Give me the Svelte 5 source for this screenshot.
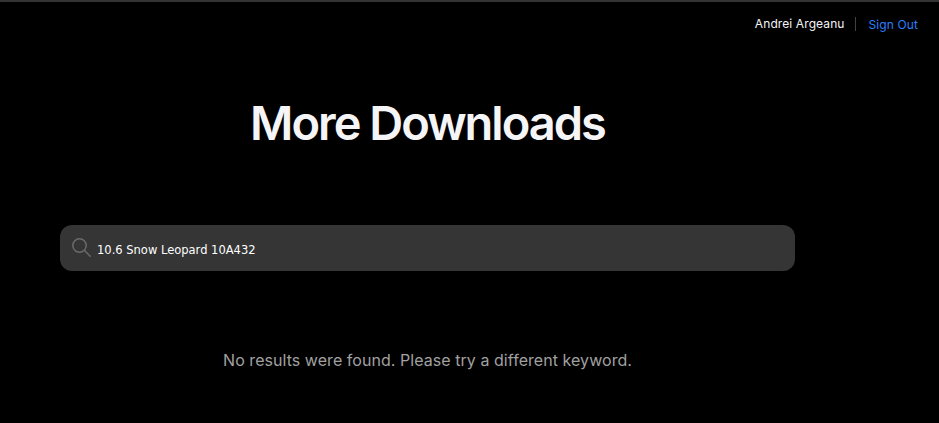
<script>
  let query = $state('10.6 Snow Leopard 10A432')
</script>

<div class="page">
  <header class="account">
    <span class="name">Andrei Argeanu</span>
    <a class="signout" href="#signout">Sign Out</a>
  </header>

  <main class="content">
    <h1>More Downloads</h1>

    <label class="search">
      <svg width="20" height="20" viewBox="0 0 20 20" fill="none" stroke="#6a6a6a" stroke-width="1.5">
        <circle cx="7.5" cy="7.5" r="6.7" />
        <path d="M12.3 12.3 L18.2 18.2" stroke-linecap="round" />
      </svg>
      <input type="text" bind:value={query} />
    </label>

    <p class="empty">No results were found. Please try a different keyword.</p>
  </main>
</div>

<style>
  :global(body) {
    background: #000;
  }

  .page {
    height: 423px;
    box-sizing: border-box;
    border-top: 2px solid #333;
    background: #000;
    font-family: Inter, "Liberation Sans", sans-serif;
    overflow: hidden;
  }

  .account {
    display: flex;
    justify-content: flex-end;
    align-items: center;
    height: 16px;
    padding: 14px 21px 0 0;
    font-size: 12px;
    letter-spacing: 0.1px;
  }

  .name {
    color: #f5f5f7;
    padding-right: 10px;
    border-right: 1px solid #424245;
    line-height: 14px;
  }

  .signout {
    color: #2b7fff;
    text-decoration: none;
    padding-left: 13px;
  }

  .content {
    width: 735px;
    margin-left: 60px;
    display: flex;
    flex-direction: column;
    align-items: center;
  }

  h1 {
    margin: 63px 0 0;
    font-size: 47px;
    line-height: 56px;
    font-weight: 600;
    letter-spacing: -2px;
    color: #f5f5f7;
  }

  .search {
    align-self: stretch;
    display: flex;
    align-items: center;
    gap: 5px;
    height: 46px;
    margin-top: 74px;
    padding-left: 12px;
    border-radius: 12px;
    background: #353535;
  }

  input {
    flex: 1;
    border: 0;
    outline: 0;
    padding: 3px 0 0;
    background: transparent;
    color: #fff;
    font-family: "DejaVu Sans", sans-serif;
    font-size: 11.5px;
  }

  .empty {
    margin: 79px 0 0;
    font-size: 16px;
    line-height: 21px;
    letter-spacing: 0.05px;
    color: #a1a1a1;
  }
</style>
